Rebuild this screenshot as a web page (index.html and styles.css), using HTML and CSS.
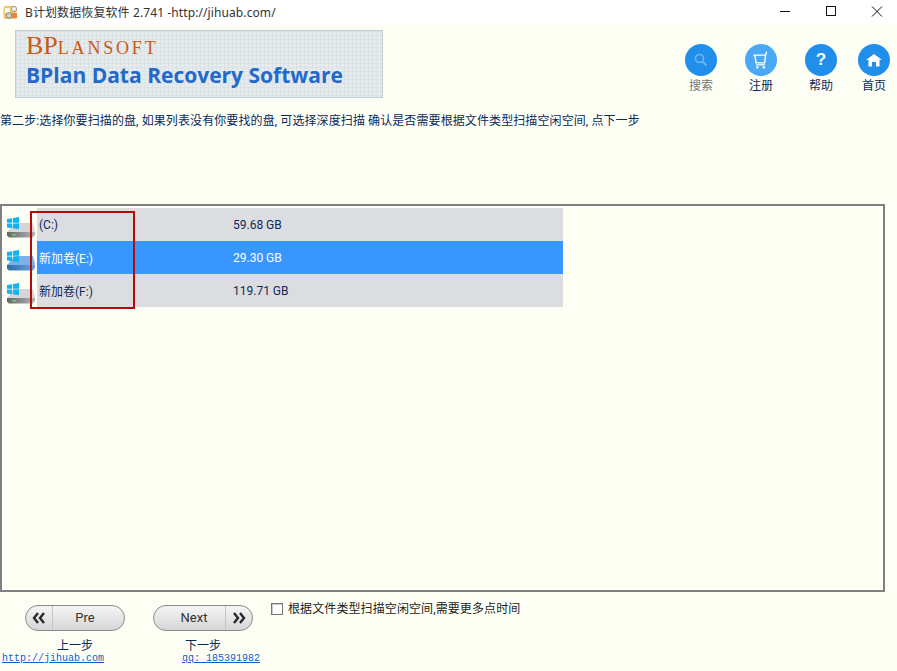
FILE: index.html
```html
<!DOCTYPE html>
<html lang="zh-CN">
<head>
    <meta charset="UTF-8">
    <meta name="viewport" content="width=device-width, initial-scale=1.0">
    <title>B计划数据恢复软件 2.741</title>
    <link rel="stylesheet" href="styles.css">
</head>
<body>
    <div class="window">
        <div class="titlebar">
            <svg class="app-icon" width="16" height="16" viewBox="0 0 16 16">
                <rect x="0.5" y="2" width="13" height="13" rx="2" fill="#f0c860"/>
                <rect x="2" y="4" width="5" height="5" fill="#f6f6f0"/>
                <rect x="9" y="9" width="5" height="5" fill="#e8873a"/>
                <circle cx="11" cy="5" r="2.6" fill="#f2f2ea" stroke="#9a9a90"/>
                <circle cx="6" cy="11.5" r="2.8" fill="#d0d0d0" stroke="#85857d"/>
            </svg>
            <span class="app-title">B计划数据恢复软件 2.741 -http://jihuab.com/</span>
            <div class="win-controls">
                <svg width="46" height="24" viewBox="0 0 46 24"><path d="M18 11.500h10" stroke="#111" fill="none"/></svg>
                <svg width="46" height="24" viewBox="0 0 46 24"><rect x="18.5" y="6.500" width="9" height="9" stroke="#111" fill="none"/></svg>
                <svg width="46" height="24" viewBox="0 0 46 24"><path d="M18 6.500l10 10M28 6.500l-10 10" stroke="#111" fill="none"/></svg>
            </div>
        </div>

        <div class="header">
            <div class="logo">
                <div class="logo-brand">BP<small>LANSOFT</small></div>
                <div class="logo-product">BPlan Data Recovery Software</div>
            </div>
            <div class="nav">
                <div class="nav-item disabled">
                    <span class="nav-circle">
                        <svg width="18" height="18" viewBox="0 0 18 18"><circle cx="7.500" cy="7.500" r="4" fill="none" stroke="#6fb6ef" stroke-width="1.6"/><path d="M10.500 10.500l4 4" stroke="#6fb6ef" stroke-width="2"/></svg>
                    </span>
                    <span>搜索</span>
                </div>
                <div class="nav-item">
                    <span class="nav-circle light">
                        <svg width="18" height="18" viewBox="0 0 22 22"><path d="M1.500 5h15l1.500-4M3.500 5.500l1.500 9h10.500l1-9M5 17h11" fill="none" stroke="#fff" stroke-width="1.700"/><circle cx="6.500" cy="20" r="1.500" fill="#fff"/><circle cx="14.500" cy="20" r="1.500" fill="#fff"/></svg>
                    </span>
                    <span>注册</span>
                </div>
                <div class="nav-item">
                    <span class="nav-circle"><b class="question">?</b></span>
                    <span>帮助</span>
                </div>
                <div class="nav-item last">
                    <span class="nav-circle">
                        <svg width="16" height="14" viewBox="0 0 16 14"><path d="M0 7L8 1l8 6z M2.500 7h11v6.500h-3.500v-4.500h-4v4.500h-3.500z" fill="#fff"/></svg>
                    </span>
                    <span>首页</span>
                </div>
            </div>
        </div>

        <p class="step-text">第二步:选择你要扫描的盘, 如果列表没有你要找的盘, 可选择深度扫描 确认是否需要根据文件类型扫描空闲空间, 点下一步</p>

        <div class="disk-panel">
            <div class="disk-row">
                <svg class="disk-icon" width="34" height="32" viewBox="0 0 34 32"><use href="#drive-gray"/></svg>
                <span class="disk-name">(C:)</span>
                <span class="disk-size">59.68 GB</span>
            </div>
            <div class="disk-row selected">
                <svg class="disk-icon" width="34" height="32" viewBox="0 0 34 32"><use href="#drive-blue"/></svg>
                <span class="disk-name">新加卷(E:)</span>
                <span class="disk-size">29.30 GB</span>
            </div>
            <div class="disk-row">
                <svg class="disk-icon" width="34" height="32" viewBox="0 0 34 32"><use href="#drive-gray"/></svg>
                <span class="disk-name">新加卷(F:)</span>
                <span class="disk-size">119.71 GB</span>
            </div>
            <div class="red-mark"></div>
        </div>

        <div class="footer">
            <div class="step-btn">
                <div class="pill">
                    <span class="pill-arrow left">
                        <svg width="14" height="12" viewBox="0 0 14 12"><path d="M6 1L2 6l4 5M12 1L8 6l4 5" fill="none" stroke="#2a2a2a" stroke-width="2.400"/></svg>
                    </span>
                    <span class="pill-label pre">Pre</span>
                </div>
                <span class="step-caption">上一步</span>
            </div>
            <div class="step-btn">
                <div class="pill">
                    <span class="pill-label next">Next</span>
                    <span class="pill-arrow right">
                        <svg width="14" height="12" viewBox="0 0 14 12"><path d="M2 1l4 5-4 5M8 1l4 5-4 5" fill="none" stroke="#2a2a2a" stroke-width="2.400"/></svg>
                    </span>
                </div>
                <span class="step-caption">下一步</span>
            </div>
            <label class="check-line"><span class="checkbox"></span>根据文件类型扫描空闲空间,需要更多点时间</label>
        </div>

        <div class="links">
            <a class="link-site" href="#">http://jihuab.com</a>
            <a class="link-qq" href="#">qq: 185391982</a>
        </div>
    </div>

    <svg width="0" height="0" class="defs">
        <defs>
            <linearGradient id="face-gray" x1="0" x2="1" y1="0" y2="0">
                <stop offset="0" stop-color="#66666a"/>
                <stop offset="1" stop-color="#b4b4b8"/>
            </linearGradient>
            <linearGradient id="face-blue" x1="0" x2="1" y1="0" y2="0">
                <stop offset="0" stop-color="#2f6ba6"/>
                <stop offset="1" stop-color="#6ba4de"/>
            </linearGradient>
            <g id="win-logo" fill="#12b4ef">
                <path d="M5 10l5.200-.8v4.600h-5.200zM11 9.100l6-1v5.700h-6zM5 14.600h5.200v4.600l-5.200-.8zM11 14.600h6v5.700l-6-1z"/>
            </g>
            <g id="drive-gray">
                <path d="M5 23l8-9h18l2 8-1 2H7z" fill="#d6d6da"/>
                <path d="M5 23h28v2.500l-2 3H7l-2-2z" fill="url(#face-gray)"/>
                <rect x="10" y="25" width="4" height="1.500" fill="#6fd06f"/>
                <use href="#win-logo"/>
            </g>
            <g id="drive-blue">
                <path d="M5 23l8-9h18l2 8-1 2H7z" fill="#7db0ea"/>
                <path d="M5 23h28v2.500l-2 3H7l-2-2z" fill="url(#face-blue)"/>
                <use href="#win-logo"/>
            </g>
        </defs>
    </svg>
</body>
</html>
```

FILE: styles.css
```css
html, body {
    margin: 0;
    padding: 0;
}
body {
    font-family: Roboto, "Noto Sans CJK SC", sans-serif;
    color: #0a2a5c;
    background-color: #fefff4;
}
.window {
    width: 897px;
    height: 671px;
    overflow: hidden;
}
.defs {
    position: absolute;
}
.titlebar {
    display: flex;
    align-items: center;
    height: 24px;
    background: #fff;
    color: #333;
    font-family: "Noto Sans", "Noto Sans CJK SC", sans-serif;
    font-size: 12px;
    letter-spacing: 0.1px;
}
.app-icon {
    margin-left: 3px;
    margin-right: 6px;
}
.app-title {
    flex: 1;
}
.win-controls {
    display: flex;
    margin-right: -3px;
}
.win-controls svg {
    display: block;
}
.header {
    display: flex;
    justify-content: space-between;
    height: 74px;
    padding-left: 15px;
    padding-top: 6px;
}
.logo {
    width: 356px;
    height: 66px;
    border: 1px solid #c3ccd3;
    background-color: #e6ebee;
    background-image:
        linear-gradient(#dce3e7 1px, transparent 1px),
        linear-gradient(90deg, #dce3e7 1px, transparent 1px);
    background-size: 4px 4px;
    padding-left: 10px;
}
.logo-brand {
    font-family: "Liberation Serif", serif;
    font-size: 26px;
    line-height: 24px;
    color: #c95a14;
    margin-top: 3px;
}
.logo-brand small {
    font-size: 18px;
    letter-spacing: 2.800px;
}
.logo-product {
    font-family: "Open Sans", sans-serif;
    font-weight: 700;
    font-size: 21px;
    line-height: 30px;
    color: #2469c8;
    margin-top: 0;
}
.nav {
    display: flex;
    padding-top: 14px;
}
.nav-item {
    display: flex;
    flex-direction: column;
    align-items: center;
    width: 60px;
    font-size: 12px;
    line-height: 16px;
    color: #0a2a5c;
}
.nav-item.last {
    width: 46px;
}
.nav-item.disabled {
    color: #777;
}
.nav-circle {
    display: flex;
    align-items: center;
    justify-content: center;
    width: 32px;
    height: 32px;
    border-radius: 50%;
    background: #1f8feb;
    margin-bottom: 2px;
}
.nav-circle.light {
    background: #4ba8f5;
}
.question {
    font-family: "Liberation Sans", sans-serif;
    font-size: 17px;
    color: #fff;
}
.step-text {
    margin: 0;
    font-size: 12px;
    letter-spacing: 0.1px;
    line-height: 16px;
    height: 100px;
    padding-top: 9px;
    box-sizing: border-box;
    white-space: nowrap;
}
.disk-panel {
    position: relative;
    height: 388px;
    width: 885px;
    box-sizing: border-box;
    border: 2px solid #808080;
    box-shadow: inset 1px 1px 0 #fff;
    padding-top: 2px;
}
.disk-row {
    position: relative;
    display: flex;
    align-items: center;
    height: 33px;
    width: 526px;
    margin-left: 35px;
    background: #dcdde0;
    font-size: 12px;
}
.disk-row.selected {
    background: #3797ff;
    color: #fff;
}
.disk-icon {
    position: absolute;
    left: -35px;
    top: 1px;
}
.disk-name {
    width: 196px;
    padding-left: 2px;
    box-sizing: border-box;
}
.red-mark {
    position: absolute;
    left: 28px;
    top: 5px;
    width: 105px;
    height: 98px;
    box-sizing: border-box;
    border: 2px solid #b40a0a;
}
.footer {
    display: flex;
    height: 48px;
    padding-left: 25px;
    padding-top: 13px;
    gap: 28px;
}
.step-btn {
    display: flex;
    flex-direction: column;
    align-items: center;
    width: 100px;
}
.pill {
    display: flex;
    width: 100px;
    height: 26px;
    box-sizing: border-box;
    border: 1px solid #8b8b8b;
    border-radius: 13px;
    background: linear-gradient(#f5f5f5, #d6d6d6);
    overflow: hidden;
}
.pill-label {
    flex: 1;
    text-align: center;
    font-size: 13px;
    line-height: 24px;
    color: #333;
}
.pill-label.pre {
    padding-right: 7px;
}
.pill-label.next {
    padding-left: 9px;
}
.pill-arrow {
    display: flex;
    align-items: center;
    justify-content: center;
    width: 27px;
    box-sizing: border-box;
}
.pill-arrow.left {
    border-right: 1px solid #c4c4c4;
}
.pill-arrow.right {
    border-left: 1px solid #c4c4c4;
}
.step-caption {
    font-size: 12px;
    line-height: 14px;
    margin-top: 8px;
}
.check-line {
    display: flex;
    align-items: flex-start;
    font-size: 12px;
    letter-spacing: 0.1px;
    line-height: 16px;
    color: #222;
    margin-left: -10px;
    margin-top: -4px;
}
.checkbox {
    width: 10px;
    height: 10px;
    border: 1px solid #777;
    background: #fff;
    box-shadow: inset 1px 1px 0 #ccc;
    margin-right: 5px;
    margin-top: 2px;
}
.links {
    display: flex;
    height: 11px;
    overflow: hidden;
    padding-left: 2px;
    font-family: "Liberation Mono", monospace;
    font-size: 10px;
    line-height: 11px;
}
.links a {
    color: #0a5fc8;
}
.link-site {
    width: 180px;
}
```
